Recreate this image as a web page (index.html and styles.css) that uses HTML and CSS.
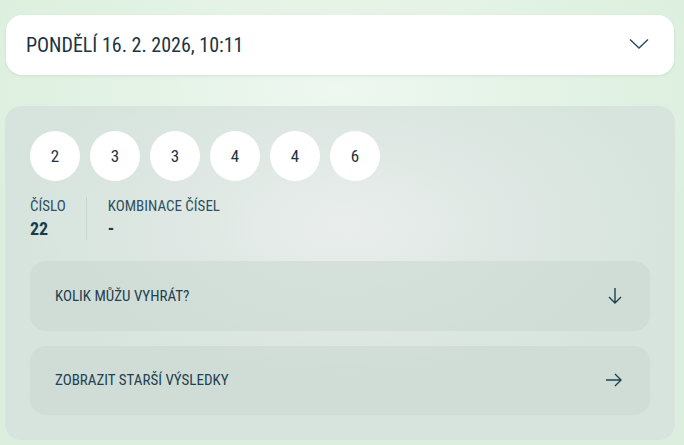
FILE: index.html
```html
<!DOCTYPE html>
<html lang="cs">
<head>
<meta charset="utf-8">
<link rel="stylesheet" href="styles.css">
</head>
<body>
<div class="page">
  <div class="date-select">
    <span class="date-text">PONDĚLÍ 16. 2. 2026, 10:11</span>
    <svg class="chev" width="20" height="12" viewBox="0 0 20 12"><path d="M1 1.5 L10 10 L19 1.5" fill="none" stroke="#2a4a5a" stroke-width="1.4"/></svg>
  </div>
  <div class="results">
    <div class="balls">
      <div class="ball">2</div>
      <div class="ball">3</div>
      <div class="ball">3</div>
      <div class="ball">4</div>
      <div class="ball">4</div>
      <div class="ball">6</div>
    </div>
    <div class="info">
      <div class="info-col first">
        <div class="label">ČÍSLO</div>
        <div class="value">22</div>
      </div>
      <div class="info-col">
        <div class="label">KOMBINACE ČÍSEL</div>
        <div class="value">-</div>
      </div>
    </div>
    <div class="btn">
      <span>KOLIK MŮŽU VYHRÁT?</span>
      <svg width="16" height="18" viewBox="0 0 16 18"><path d="M8 1 V16 M2 10 L8 16 L14 10" fill="none" stroke="#1f4150" stroke-width="1.4"/></svg>
    </div>
    <div class="btn">
      <span>ZOBRAZIT STARŠÍ VÝSLEDKY</span>
      <svg width="18" height="16" viewBox="0 0 18 16"><path d="M1 8 H16 M10 2 L16 8 L10 14" fill="none" stroke="#1f4150" stroke-width="1.4"/></svg>
    </div>
  </div>
</div>
</body>
</html>
```
FILE: styles.css
```css
html, body {
  margin: 0;
  padding: 0;
}
body {
  width: 684px;
  height: 445px;
  overflow: hidden;
  background: radial-gradient(ellipse 400px 200px at 340px 90px, #eef7f0 0%, #e2f2e4 60%, #dcefde 100%);
  font-family: "Roboto Condensed", Roboto, "Liberation Sans", sans-serif;
  font-stretch: condensed;
  color: #1f3f4e;
}
.page {
  padding: 15px 10px 0 6px;
  display: flex;
  flex-direction: column;
  gap: 31px;
}
.date-select {
  height: 60px;
  background: #ffffff;
  border-radius: 16px;
  display: flex;
  align-items: center;
  justify-content: space-between;
  padding: 0 25px 0 20px;
  box-shadow: 0 1px 3px rgba(80, 120, 90, 0.12);
}
.date-text {
  font-size: 20px;
  color: #1c3442;
}
.chev {
  margin-top: -2px;
}
.results {
  margin-left: -1px;
  margin-right: -1px;
  border-radius: 16px;
  background: radial-gradient(ellipse 320px 180px at 340px 120px, #e9eeec 0%, #dee7e3 55%, #d7e4dd 100%);
  padding: 25px 25px 25px 25px;
  display: flex;
  flex-direction: column;
  height: 334px;
  box-sizing: border-box;
}
.balls {
  display: flex;
  gap: 10px;
}
.ball {
  width: 50px;
  height: 50px;
  border-radius: 50%;
  background: #fff;
  display: flex;
  align-items: center;
  justify-content: center;
  font-size: 17px;
  color: #1c3442;
}
.info {
  display: flex;
  margin-top: 16px;
  margin-bottom: 21px;
}
.info-col {
  display: flex;
  flex-direction: column;
  gap: 3px;
}
.info-col.first {
  padding-right: 20px;
  margin-right: 21px;
  border-right: 1px solid #c9d6d0;
}
.label {
  font-size: 15px;
  line-height: 18px;
  color: #2e5060;
}
.value {
  font-size: 18px;
  line-height: 22px;
  font-weight: 700;
  color: #1c3a4a;
}
.btn {
  height: 70px;
  border-radius: 16px;
  background: rgba(200, 215, 208, 0.55);
  display: flex;
  align-items: center;
  justify-content: space-between;
  padding: 0 27px 0 25px;
  font-size: 15px;
  color: #1f4150;
}
.btn + .btn {
  margin-top: 15px;
}
```
